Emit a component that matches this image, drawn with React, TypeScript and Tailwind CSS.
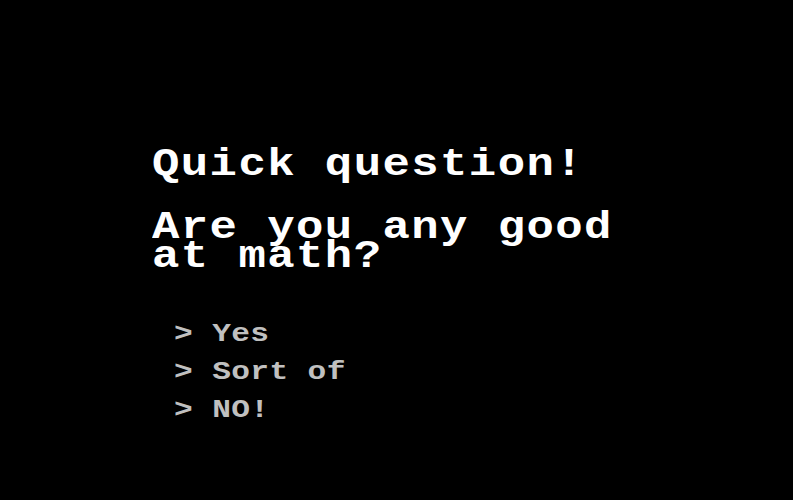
const options = ["Yes", "Sort of", "NO!"]

export default function App() {
  return (
    <div className="h-[500px] w-full overflow-hidden bg-black pl-[152px] pt-[150px] font-['Liberation_Mono',monospace] font-bold">
      {/* Prompt – glyphs widened a bit for the chunky terminal look */}
      <h1 className="w-[400px] origin-left scale-x-[1.2] text-[38px] leading-[29px] tracking-[1.2px] text-white">
        Quick question!
      </h1>
      <p className="mt-[34px] w-[400px] origin-left scale-x-[1.2] text-[38px] leading-[29px] tracking-[1.2px] text-white">
        Are you any good at math?
      </p>

      {/* Answers */}
      <ul className="mt-[44px] w-[300px] pl-[22px]">
        {options.map((opt) => (
          <li key={opt}>
            <button className="origin-left scale-x-[1.2] cursor-pointer whitespace-pre text-[26px] leading-[38px] tracking-[0.3px] text-[#c0c0c0] hover:text-white">
              {"> " + opt}
            </button>
          </li>
        ))}
      </ul>
    </div>
  )
}
